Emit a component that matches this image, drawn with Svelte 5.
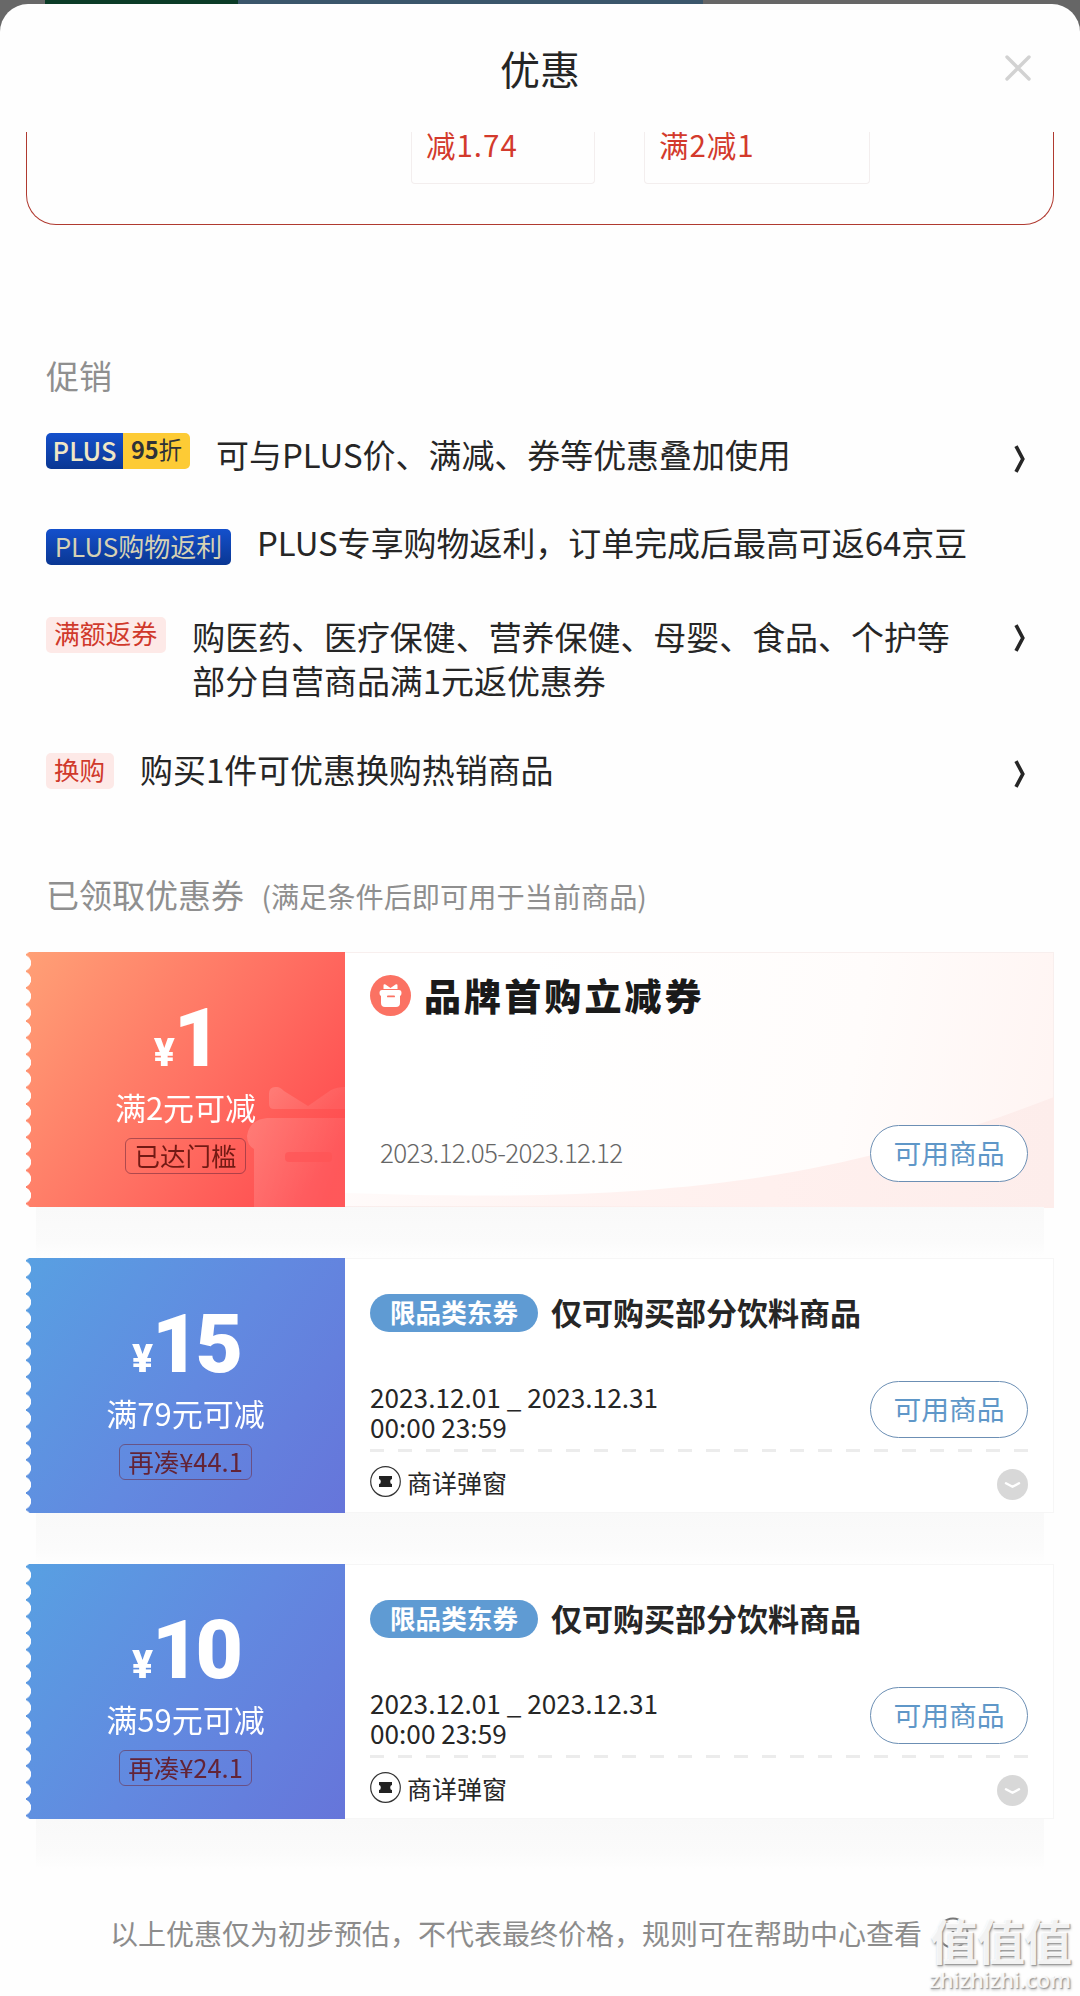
<script lang="ts">
  type Promo = { kind: string; tag: string; extra?: string; text: string; arrow: boolean };
  type Coupon = {
    amount: number;
    rule: string;
    state: string;
    title: string;
    brand?: boolean;
    dates: string[];
  };

  const promos: Promo[] = [
    { kind: 'discount', tag: 'PLUS', extra: '95', text: '可与PLUS价、满减、券等优惠叠加使用', arrow: true },
    { kind: 'rebate', tag: 'PLUS购物返利', text: 'PLUS专享购物返利，订单完成后最高可返64京豆', arrow: false },
    { kind: 'voucher', tag: '满额返券', text: '购医药、医疗保健、营养保健、母婴、食品、个护等部分自营商品满1元返优惠券', arrow: true },
    { kind: 'swap', tag: '换购', text: '购买1件可优惠换购热销商品', arrow: true },
  ];

  const coupons: Coupon[] = [
    { amount: 1, rule: '满2元可减', state: '已达门槛', title: '品牌首购立减券', brand: true, dates: ['2023.12.05-2023.12.12'] },
    { amount: 15, rule: '满79元可减', state: '再凑¥44.1', title: '仅可购买部分饮料商品', dates: ['2023.12.01 _ 2023.12.31', '00:00 23:59'] },
    { amount: 10, rule: '满59元可减', state: '再凑¥24.1', title: '仅可购买部分饮料商品', dates: ['2023.12.01 _ 2023.12.31', '00:00 23:59'] },
  ];
</script>

<main class="page">
  <section class="sheet">

    <header class="sheet-header">
      <h1>优惠</h1>
      <button class="close" aria-label="关闭">
        <svg width="28" height="28" viewBox="0 0 28 28" fill="none" stroke="#d2d2d2" stroke-width="3.4" stroke-linecap="round">
          <path d="M3 3l22 22M25 3L3 25"/>
        </svg>
      </button>
    </header>

    <!-- Price breakdown, scrolled partly under the header -->
    <div class="breakdown">
      <div class="cut cut--narrow">减1.74</div>
      <div class="cut cut--wide">满2减1</div>
    </div>

    <h2 class="heading">促销</h2>
    <ul class="promos">
      {#each promos as promo}
        <li class="promo promo--{promo.kind}">
          <span class="tag">
            <span class="tag-main">{promo.tag}</span>
            {#if promo.extra}
              <span class="tag-extra"><b>{promo.extra}</b>折</span>
            {/if}
          </span>
          <p>{promo.text}</p>
          {#if promo.arrow}
            <svg class="arrow" width="12" height="28" viewBox="0 0 12 28" fill="none" stroke="#262626" stroke-width="3.6">
              <path d="M2 1.2L8.8 14L2 26.8"/>
            </svg>
          {/if}
        </li>
      {/each}
    </ul>

    <h2 class="heading heading--coupons">
      已领取优惠券 <small>(满足条件后即可用于当前商品)</small>
    </h2>

    {#each coupons as coupon}
      <article class="coupon" class:coupon--brand={coupon.brand}>
        <div class="value">
          {#if coupon.brand}
            <svg class="gift-mark" width="98" height="122" viewBox="0 0 98 122">
              <defs>
                <linearGradient id="gift-fade" x1="0" y1="0" x2="1" y2=".3">
                  <stop offset="0" stop-color="#fff" stop-opacity=".17"/>
                  <stop offset="1" stop-color="#fff" stop-opacity=".06"/>
                </linearGradient>
              </defs>
              <path fill="url(#gift-fade)" d="M22 9q0-8 8-7q3 0 7 4l24 15L84 5q6-3 14-3v22H27q-5 0-5-5z"/>
              <path fill="url(#gift-fade)" d="M20 33h78v89H7V64Q0 60 0 51Q2 35 20 33z"/>
              <rect x="38" y="67" width="47" height="10" rx="4" fill="#ff5456" fill-opacity=".7"/>
            </svg>
          {/if}
          <div class="amount"><span class="yuan">¥</span>{coupon.amount}</div>
          <div class="rule">{coupon.rule}</div>
          <div class="state">{coupon.state}</div>
        </div>

        <div class="detail">
          {#if coupon.brand}
            <svg class="swoosh" width="709" height="255" viewBox="0 0 709 255" preserveAspectRatio="none">
              <defs>
                <linearGradient id="swoosh-fill" x1="0" y1="0" x2="1" y2="0">
                  <stop offset="0" stop-color="#ffe9e6" stop-opacity=".2"/>
                  <stop offset=".6" stop-color="#fff0ee"/>
                  <stop offset="1" stop-color="#fdedeb"/>
                </linearGradient>
              </defs>
              <path fill="url(#swoosh-fill)" d="M0 240C300 250 480 233 709 144V255H0z"/>
            </svg>
          {/if}

          <div class="title-row">
            {#if coupon.brand}
              <svg width="41" height="41" viewBox="0 0 41 41">
                <circle cx="20.5" cy="20.5" r="20.5" fill="#fb7263"/>
                <path fill="#fff" d="M13.5 10.5q0-2 2-1l5 3.500l5-3.500q2-1 2 1v3.500h-14zM12 15h17q2.500 0 2.500 3q0 2.500-1.500 3v7q0 4-4 4H15q-4 0-4-4v-7q-1.500-.5-1.500-3q0-3 2.500-3z"/>
                <rect x="17" y="20.5" width="8" height="1.8" rx=".9" fill="#fb7263"/>
              </svg>
            {:else}
              <span class="pill">限品类东券</span>
            {/if}
            <h3>{coupon.title}</h3>
          </div>

          <div class="use-row">
            <div class="dates">
              {#each coupon.dates as line}
                <div>{line}</div>
              {/each}
            </div>
            <button class="use">可用商品</button>
          </div>

          {#if !coupon.brand}
            <div class="source-row">
              <svg class="ticket" width="31" height="31" viewBox="0 0 31 31">
                <circle cx="15.5" cy="15.5" r="14.8" fill="none" stroke="#333" stroke-width="1.2"/>
                <path fill="#222" d="M9 10h13v3q-1.800 0-1.800 2.500t1.800 2.500v3H9v-3q1.800 0 1.800-2.500T9 13z"/>
              </svg>
              <span>商详弹窗</span>
              <svg class="expand" width="31" height="31" viewBox="0 0 31 31" fill="none">
                <circle cx="15.5" cy="15.5" r="15.5" fill="#d8d8d8"/>
                <path d="M9 14.300l6.500 3.400l6.500-3.400" stroke="#fff" stroke-width="2.4" stroke-linecap="round" stroke-linejoin="round"/>
              </svg>
            </div>
          {/if}
        </div>
      </article>
    {/each}

    <footer class="note">
      <span>以上优惠仅为初步预估，不代表最终价格，规则可在帮助中心查看</span>
      <svg width="32" height="32" viewBox="0 0 32 32" fill="none" stroke="#777" stroke-width="2">
        <circle cx="16" cy="16" r="14.5"/>
        <path d="M16 14v9M16 8.500v3" stroke-width="2.6"/>
      </svg>
    </footer>
  </section>

  <div class="watermark">
    <div class="watermark-logo">值值值</div>
    <div class="watermark-url">zhizhizhi.com</div>
  </div>
</main>

<style>
  :global(body) { margin: 0; }

  .page {
    position: relative;
    box-sizing: border-box;
    width: 1080px;
    height: 1996px;
    padding-top: 4px;
    overflow: hidden;
    /* dimmed page that shows above the sheet */
    background: linear-gradient(90deg, #686868 45px, #0b3c27 45px 238px, #3b566b 238px 703px, #666 703px);
    font-family: "Noto Sans CJK SC", "Noto Sans", sans-serif;
    color: #262626;
  }

  .sheet {
    height: 1992px;
    background: #fefefe;
    border-radius: 28px 28px 0 0;
  }

  h1, h2, h3, p, ul { margin: 0; padding: 0; font-weight: 400; }

  button { font-family: inherit; padding: 0; }

  /* ── Header ── */
  .sheet-header {
    display: grid;
    grid-template-columns: 1fr auto 1fr;
    align-items: center;
    height: 128px;
  }

  h1 {
    grid-column: 2;
    font-size: 40px;
    line-height: 60px;
  }

  .close {
    justify-self: end;
    display: flex;
    margin-right: 48px;
    border: 0;
    background: none;
  }

  /* ── Breakdown ── */
  .breakdown {
    display: flex;
    gap: 49px;
    box-sizing: border-box;
    height: 93px;
    margin: 0 26px;
    padding-left: 384px;
    border: 1px solid #b03a30;
    border-top: 0;
    border-radius: 0 0 30px 30px;
    overflow: hidden;
  }

  .cut {
    box-sizing: border-box;
    height: 52px;
    padding-left: 14px;
    border: 1px solid #f3eeee;
    border-top: 0;
    border-radius: 0 0 4px 4px;
    font-size: 29.5px;
    line-height: 24px;
    letter-spacing: 1px;
    color: #d33a2c;
  }

  .cut--narrow { width: 184px; }
  .cut--wide { width: 226px; }

  /* ── Promotions ── */
  .heading {
    margin: 128px 0 0 46px;
    font-size: 33px;
    line-height: 44px;
    color: #8f8f8f;
  }

  .promos { list-style: none; }

  .promo {
    display: flex;
    align-items: flex-start;
    margin: 0 54px 0 46px;
  }

  .promo p {
    max-width: 762px;
    margin-left: 26px;
    font-size: 32.95px;
    line-height: 44px;
  }

  .promo--discount { margin-top: 35px; }
  .promo--rebate { margin-top: 44px; }
  .promo--voucher { margin-top: 49px; }
  .promo--swap { margin-top: 45px; }

  .tag {
    display: flex;
    flex-shrink: 0;
    height: 36px;
    border-radius: 5px;
    overflow: hidden;
    font-size: 25.5px;
    line-height: 33px;
    white-space: nowrap;
  }

  .promo--discount .tag { margin-top: 1px; }
  .promo--rebate .tag { margin-top: 9px; }
  .promo--voucher .tag { margin-top: 3px; }
  .promo--swap .tag { margin-top: 6px; }

  .promo--discount .tag-main,
  .promo--rebate .tag-main {
    background: linear-gradient(#1450cc, #0a3793);
    color: #f0e7c6;
  }

  .promo--discount .tag-main { width: 77px; text-align: center; font-weight: 500; }
  .promo--rebate .tag-main { width: 185px; text-align: center; font-size: 26px; color: #d6d2b4; }

  .promo--voucher .tag-main,
  .promo--swap .tag-main {
    padding: 0 9px 0 8px;
    background: #fde9e7;
    color: #d0392b;
    line-height: 32px;
  }

  .promo--voucher .tag-main { font-size: 25.8px; }

  .tag-extra {
    width: 67px;
    background: #fdcb35;
    color: #2f3238;
    font-size: 23.5px;
    text-align: center;
  }

  .arrow { margin: 13px 0 0 auto; }
  .promo--voucher .arrow { margin-top: 10px; }

  /* ── Coupons ── */
  .heading--coupons {
    height: 44px;
    margin: 81px 0 36px 46px;
  }

  .heading small { margin-left: 10px; font-size: 28.2px; }

  .coupon {
    position: relative;
    display: flex;
    height: 255px;
    margin: 0 26px 51px;
  }

  .coupon::after {
    content: '';
    position: absolute;
    inset: 255px 10px -50px;
    background: linear-gradient(#f9f9f9, #fbfbfb 70%, #fefefe);
  }

  .value {
    position: relative;
    display: flex;
    flex-direction: column;
    align-items: center;
    width: 319px;
    background: linear-gradient(125deg, #58a0e2, #6289e0 52%, #6675da);
    color: #fff;
    -webkit-mask: radial-gradient(circle at -3px 50%, transparent 7.8px, #000 8.4px) 0 2.7px / 100% 16.6px repeat-y;
    mask: radial-gradient(circle at -3px 50%, transparent 7.8px, #000 8.4px) 0 2.7px / 100% 16.6px repeat-y;
  }

  .coupon--brand .value {
    background: linear-gradient(125deg, #ffa076, #ff7163 52%, #ff4d50 90%);
  }

  .gift-mark {
    position: absolute;
    right: 0;
    bottom: 0;
  }

  .amount {
    height: 99px;
    margin-top: 37px;
    font: 900 82px/99px Roboto, "Noto Sans", sans-serif;
    letter-spacing: -4px;
  }

  .yuan { margin-right: 3px; font-size: 39px; }

  .rule {
    position: relative;
    margin-top: -1px;
    font-size: 31px;
    line-height: 40px;
  }

  .state {
    position: relative;
    box-sizing: border-box;
    height: 36px;
    margin-top: 11px;
    padding: 0 8px;
    border: 1px solid rgba(110, 40, 60, .55);
    border-radius: 6px;
    font-size: 25.5px;
    line-height: 32px;
    color: #632336;
  }

  .coupon--brand .state { color: #731a14; }

  .detail {
    position: relative;
    box-sizing: border-box;
    flex: 1;
    padding: 35px 25px 0;
    border: 1px solid #f6f6f6;
    border-left: 0;
    background: #fff;
  }

  .coupon--brand .detail {
    padding-top: 22px;
    border-color: #f8efee;
    background: linear-gradient(100deg, #fff 25%, #fffcfb 70%, #fff4f2);
  }

  .swoosh { position: absolute; inset: 0; }

  .title-row {
    position: relative;
    display: flex;
    align-items: center;
    gap: 13px;
    height: 38px;
  }

  .coupon--brand .title-row { height: 41px; }

  .pill {
    width: 168px;
    height: 38px;
    border-radius: 19px;
    background: #5f9bd3;
    color: #fff;
    font-size: 25.6px;
    font-weight: 700;
    line-height: 36px;
    text-align: center;
  }

  h3 {
    padding-bottom: 2px;
    font-size: 31px;
    font-weight: 700;
    line-height: 36px;
  }

  .coupon--brand h3 {
    padding-bottom: 1px;
    font-size: 37px;
    font-weight: 900;
    letter-spacing: 3.1px;
    color: #1a1a1a;
  }

  .use-row {
    position: relative;
    display: flex;
    justify-content: space-between;
    align-items: flex-start;
    height: 60px;
    margin-top: 49px;
  }

  .coupon--brand .use-row { margin-top: 109px; }

  .dates {
    padding-top: 1px;
    font-size: 26.2px;
    line-height: 30px;
  }

  .coupon--brand .dates {
    padding: 12px 0 0 10px;
    font-size: 26px;
    font-weight: 300;
    letter-spacing: -.7px;
    color: #666;
  }

  .use {
    box-sizing: border-box;
    width: 158px;
    height: 57px;
    border: 1px solid #6c8fb4;
    border-radius: 29px;
    background: #fff;
    font-size: 27.8px;
    line-height: 50px;
    padding-bottom: 3px;
    color: #5f97c8;
  }

  .source-row {
    display: flex;
    align-items: center;
    gap: 6px;
    height: 44px;
    margin-top: 8px;
    padding-top: 11px;
    background: repeating-linear-gradient(90deg, #ececec 0 14px, transparent 14px 28px) 0 0 / 100% 3px no-repeat;
    font-size: 25px;
    line-height: 30px;
  }

  .ticket { margin-bottom: 2px; }
  .expand { margin: 4px 0 0 auto; }

  /* ── Footer ── */
  .note {
    display: flex;
    align-items: center;
    margin: 94px 0 0 110px;
    font-size: 28px;
    line-height: 40px;
    color: #8c8c8c;
  }

  .note svg { margin-left: 15px; }

  /* ── Watermark ── */
  .watermark {
    position: absolute;
    right: 9px;
    bottom: 3px;
    color: rgba(255, 255, 255, .88);
    text-align: right;
    text-shadow: 1px 1px 1px #999, 1px 2px 3px #bbb;
  }

  .watermark-logo {
    font-size: 48px;
    font-weight: 700;
    line-height: 52px;
    letter-spacing: -1px;
  }

  .watermark-url {
    font: 500 22px/28px "Noto Sans", sans-serif;
  }
</style>
